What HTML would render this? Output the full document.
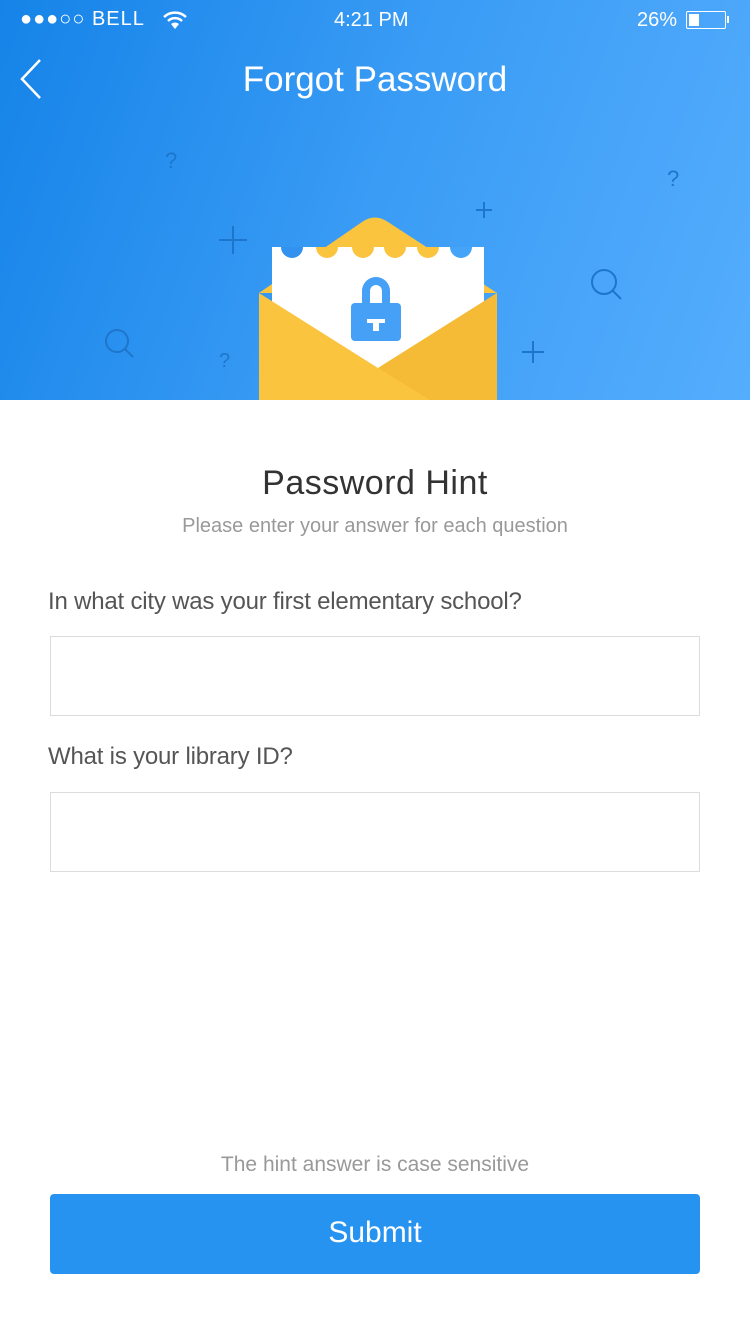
<!DOCTYPE html>
<html><head><meta charset="utf-8"><style>
*{margin:0;padding:0;box-sizing:border-box}
body{width:750px;height:1334px;background:#fff;font-family:"Liberation Sans",sans-serif;position:relative;overflow:hidden}
.hdr{position:absolute;left:0;top:0;width:750px;height:400px;background:linear-gradient(110deg,#1583e8 0%,#3a9cf5 50%,#55adfd 100%);overflow:hidden}
.t{position:absolute;color:#fff}
.lbl{position:absolute;left:48px;font-size:24px;color:#555;letter-spacing:-.2px}
.inp{position:absolute;left:50px;width:650px;height:80px;border:1px solid #dcdcdc}
</style></head><body>
<div class="hdr">
<div class="t" style="left:20px;top:8px;font-size:20px;letter-spacing:1px">●●●○○ BELL</div>
<svg style="position:absolute;left:162px;top:10px" width="26" height="20" viewBox="0 0 26 20"><path d="M2 7a16 16 0 0 1 22 0M6 11a10 10 0 0 1 14 0" stroke="#fff" stroke-width="2.5" fill="none"/><path d="M9 14a6 6 0 0 1 8 0L13 19z" fill="#fff"/></svg>
<div class="t" style="left:334px;top:9px;font-size:20px">4:21 PM</div>
<div class="t" style="left:637px;top:9px;font-size:20px">26%</div>
<div style="position:absolute;left:686px;top:11px;width:40px;height:18px;border:1.5px solid #fff;border-radius:2px"><div style="width:10px;height:12px;background:#fff;margin:1.5px"></div></div>
<div style="position:absolute;left:727px;top:16px;width:2px;height:7px;background:#fff"></div>
<svg style="position:absolute;left:18px;top:58px" width="26" height="42"><path d="M22 2L4 21l18 19" stroke="#fff" stroke-width="2.5" fill="none"/></svg>
<div class="t" style="left:0;width:750px;text-align:center;top:60px;font-size:35px">Forgot Password</div>
<div style="position:absolute;color:#1e76cc;font-size:22px;left:165px;top:148px">?</div>
<div style="position:absolute;color:#1e76cc;font-size:22px;left:667px;top:166px">?</div>
<div style="position:absolute;color:#1e76cc;font-size:20px;left:219px;top:350px">?</div>
<svg style="position:absolute;left:0;top:0" width="750" height="400" stroke="#1e76cc" stroke-width="2" fill="none">
<path d="M233 226v28M219 240h28M484 202v16M476 210h16M533 341v22M522 352h22"/>
<circle cx="117" cy="341" r="11"/><path d="M125 349l8 8"/>
<circle cx="604" cy="282" r="12"/><path d="M612 290l9 9"/>
</svg>
<svg style="position:absolute;left:0;top:0" width="750" height="400">
<path d="M259 293L362 222Q375 213 388 222L497 293Z" fill="#fbc43f"/>
<path d="M272 247h212v160H272z" fill="#fff"/>
<g fill="#3391ef"><path d="M281 247a11 11 0 0 0 22 0z"/><path d="M450 247a11 11 0 0 0 22 0z" fill="#45a4f8"/></g>
<g fill="#fbc43f"><path d="M316 247a11 11 0 0 0 22 0z"/><path d="M352 247a11 11 0 0 0 22 0z"/><path d="M384 247a11 11 0 0 0 22 0z"/><path d="M417 247a11 11 0 0 0 22 0z"/></g>
<path d="M351 307a4 4 0 0 1 4-4h42a4 4 0 0 1 4 4v30a4 4 0 0 1-4 4h-42a4 4 0 0 1-4-4z" fill="#45a0f6"/>
<path d="M362 303v-12a14 14 0 0 1 28 0v12h-8v-12a6 6 0 0 0-12 0v12z" fill="#45a0f6"/>
<path d="M367 319h18v4h-6v8h-6v-8h-6z" fill="#fff"/>
<path d="M259 293L378 368L497 293V400H259Z" fill="#fbc43f"/>
<path d="M378 368L497 293V400H430Z" fill="#f5bb36"/>
</svg>
</div>
<div style="position:absolute;left:0;width:750px;text-align:center;top:464px;font-size:34px;color:#333;letter-spacing:.5px">Password Hint</div>
<div style="position:absolute;left:0;width:750px;text-align:center;top:515px;font-size:20px;color:#999">Please enter your answer for each question</div>
<div class="lbl" style="top:588px">In what city was your first elementary school?</div>
<div class="inp" style="top:636px"></div>
<div class="lbl" style="top:743px">What is your library ID?</div>
<div class="inp" style="top:792px"></div>
<div style="position:absolute;left:0;width:750px;text-align:center;top:1153px;font-size:21px;color:#999">The hint answer is case sensitive</div>
<div style="position:absolute;left:50px;top:1194px;width:650px;height:80px;background:#2693f1;border-radius:4px;color:#fff;font-size:30px;text-align:center;line-height:78px">Submit</div>
</body></html>
